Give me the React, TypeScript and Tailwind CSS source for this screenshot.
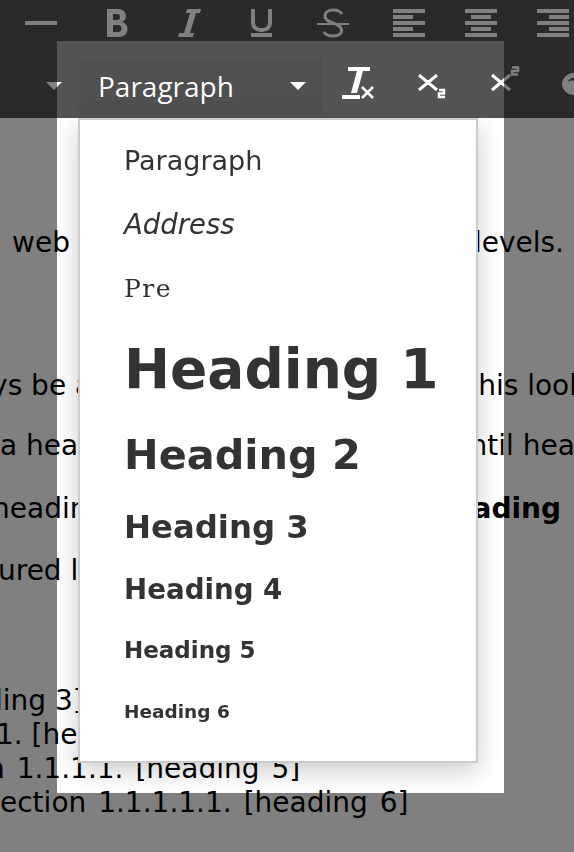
const dim = "#808080";

function Icon({ children }: { children: React.ReactNode }) {
  return (
    <svg width="32" height="32" viewBox="0 0 32 32" fill={dim} className="shrink-0">
      {children}
    </svg>
  );
}

function Bars({ short }: { short: [number, number] }) {
  return (
    <Icon>
      <rect x="0" y="2" width="32" height="4" />
      <rect x={short[0]} y="8" width={short[1]} height="4" />
      <rect x="0" y="14" width="32" height="4" />
      <rect x={short[0]} y="20" width={short[1]} height="4" />
      <rect x="0" y="26" width="32" height="4" />
    </Icon>
  );
}

function Caret({ className }: { className: string }) {
  return (
    <svg width="16" height="8" viewBox="0 0 16 8" fill={dim} className={className}>
      <path d="M0 0h16L8 8z" />
    </svg>
  );
}

function TopRow() {
  return (
    <div className="flex items-center h-[46px] pl-[25px] gap-10">
      <div className="mr-1">
        <Icon>
          <rect x="0" y="14" width="32" height="4" />
        </Icon>
      </div>
      <Icon>
        <path
          fillRule="evenodd"
          d="M6 2h11c5 0 8 3 8 7 0 3-1.500 5-4 6 3.500.8 5.500 3.500 5.500 7 0 5-3.500 8-9 8H6zM12 7v6h4c2 0 3-1.200 3-3s-1-3-3-3zM12 18v7h5c2.300 0 3.500-1.400 3.500-3.500S19.300 18 17 18z"
        />
      </Icon>
      <Icon>
        <path d="M14 2h14l-1 4h-4l-6 20h4l-1 4H5l1-4h5l6-20h-4z" />
      </Icon>
      <Icon>
        <path d="M6 2h4v13c0 4 2.500 6 6.500 6s6.500-2 6.500-6V2h4v13c0 6.500-4 10-10.500 10S6 21.500 6 15z" />
        <rect x="6" y="26" width="21" height="4" />
      </Icon>
      <Icon>
        <rect x="0" y="16" width="32" height="2" />
        <path
          fill="none"
          stroke={dim}
          strokeWidth="3"
          d="M25 7C23 3.500 20 3 16 3 11 3 8 5.500 8 9c0 4 4 5.500 8 7 4 1.500 8.500 3 8.500 7.500 0 3.500-3.500 5.500-8.500 5.500-4 0-7-1-9-4"
        />
      </Icon>
      <div className="ml-1 flex gap-10">
        <Bars short={[0, 20]} />
        <Bars short={[6, 20]} />
        <Bars short={[12, 20]} />
      </div>
    </div>
  );
}

function BottomRow() {
  return (
    <div className="flex items-center h-14 mt-3">
      <Caret className="ml-[46px] shrink-0" />
      <div className="ml-[17px] w-[243px] h-14 shrink-0 bg-[#282828] flex items-center justify-between pl-[19px] pr-4">
        <span className="text-[28px] text-[#808080] font-['Open_Sans',sans-serif] leading-none">Paragraph</span>
        <Caret className="shrink-0" />
      </div>
      <svg width="32" height="32" viewBox="0 0 32 32" className="ml-5 shrink-0 self-start mt-[9px]">
        <path fill={dim} d="M6 0h22v4h-7l-6 22H9l6-22H6z" />
        <rect x="0" y="28" width="18" height="4" fill={dim} />
        <path stroke={dim} strokeWidth="2.500" fill="none" d="M20 20l11 11M31 20L20 31" />
      </svg>
      <svg width="28" height="26" viewBox="0 0 28 26" fill="none" stroke={dim} className="ml-[44px] shrink-0 self-start mt-4">
        <path strokeWidth="3" d="M1 1l18 15M19 1L1 16" />
        <path strokeWidth="2.500" d="M21 16h5v3.500h-5V23h6" />
      </svg>
      <svg width="30" height="26" viewBox="0 0 30 26" fill="none" stroke={dim} className="ml-[45px] shrink-0 self-start mt-2">
        <path strokeWidth="3" d="M1 9l18 15M19 9L1 24" />
        <path strokeWidth="2.500" d="M21 1.500h6V5h-6v3.500h6" />
      </svg>
      <svg width="24" height="22" viewBox="0 0 24 22" className="ml-[41px] shrink-0 self-start mt-[15px]">
        <ellipse cx="12" cy="11" rx="12" ry="11" fill={dim} />
        <path d="M6 9c1-3 4-5 8-4l-1 3c-3-1-5 0-7 1z" fill="#2a2a2a" />
      </svg>
    </div>
  );
}

function Line({
  left,
  right,
  ml,
  className,
}: {
  left: React.ReactNode;
  right?: React.ReactNode;
  ml: string;
  className: string;
}) {
  return (
    <div className={`flex justify-between whitespace-nowrap h-[34px] leading-[34px] ${className}`}>
      <span className={ml}>{left}</span>
      {right}
    </div>
  );
}

function Page() {
  return (
    <main className="flex flex-col pt-[108px] text-[28px] text-black font-['DejaVu_Sans',sans-serif] overflow-hidden">
      <Line className="" ml="ml-3" left="web" right={<span className="mr-[10px]">levels.</span>} />
      <Line className="mt-[109px]" ml="-ml-[49px]" left="ways be a" right={<span className="-mr-[26px]">his looks</span>} />
      <Line className="mt-[26px]" ml="ml-0" left="a heading" right={<span className="-mr-[62px]">ntil heading</span>} />
      <Line className="mt-[29px]" ml="-ml-[8px]" left="heading" right={<b className="mr-[13px]">ading</b>} />
      <Line className="mt-[28px]" ml="-ml-[2px]" left="ured l" />
      <Line className="mt-[96px]" ml="-ml-[15px]" left="ding 3]" />
      <Line className="" ml="-ml-[4px]" left="1. [heading" />
      <Line className="[word-spacing:3px]" ml="-ml-[13px]" left="n 1.1.1.1. [heading 5]" />
      <Line className="[word-spacing:3px]" ml="ml-0" left="ection 1.1.1.1.1. [heading 6]" />
    </main>
  );
}

const items: { label: string; h: string; cls: string }[] = [
  { label: "Paragraph", h: "h-[64px]", cls: "text-[27px]" },
  { label: "Address", h: "h-[66px]", cls: "text-[27.500px] italic" },
  { label: "Pre", h: "h-[60px]", cls: "font-['DejaVu_Serif',serif] text-[25px] tracking-[1.500px]" },
  { label: "Heading 1", h: "h-[102px]", cls: "text-[55px] font-bold" },
  { label: "Heading 2", h: "h-[72px]", cls: "text-[41.400px] font-bold" },
  { label: "Heading 3", h: "h-[70px]", cls: "text-[32.300px] font-bold" },
  { label: "Heading 4", h: "h-[55px]", cls: "text-[27.700px] font-bold" },
  { label: "Heading 5", h: "h-[67px]", cls: "text-[23px] font-bold" },
  { label: "Heading 6", h: "h-[57px]", cls: "text-[18.500px] font-bold" },
];

export default function App() {
  return (
    <div className="relative w-[574px] h-[852px] overflow-hidden bg-[#808080]">
      <header className="flex flex-col h-[118px] bg-[#2a2a2a] overflow-hidden">
        <TopRow />
        <BottomRow />
      </header>
      <Page />
      <div className="absolute left-[57px] top-[41px] w-[447px] h-[752px] backdrop-brightness-200" />
      <div className="absolute left-[78px] top-[118px] w-[400px] h-[645px] bg-white border-2 border-[#ccc] shadow-[0_8px_24px_rgba(0,0,0,0.2)] pt-2 flex flex-col text-[#333] font-['DejaVu_Sans',sans-serif]">
        {items.map((it) => (
          <div key={it.label} className={`${it.h} flex items-center pl-[44px] leading-none whitespace-nowrap shrink-0`}>
            <span className={it.cls}>{it.label}</span>
          </div>
        ))}
      </div>
    </div>
  );
}
